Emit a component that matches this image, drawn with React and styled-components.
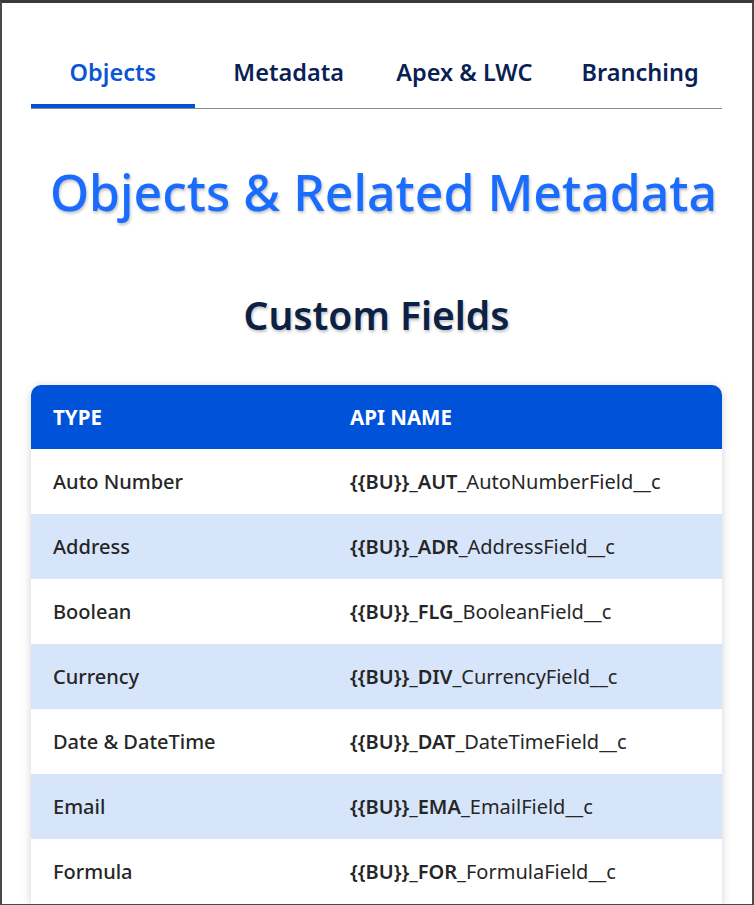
import React from "react";
import styled, { createGlobalStyle } from "styled-components";

const Global = createGlobalStyle`
  html, body { margin: 0; padding: 0; background: #fff; }
  body { font-family: "Noto Sans", "Open Sans", sans-serif; }
  * { box-sizing: border-box; }
`;

const Frame = styled.div`
  width: 754px;
  height: 905px;
  overflow: hidden;
  border-top: 3px solid #3a3a3a;
  border-left: 2px solid #4a4a4a;
  border-right: 2px solid #4a4a4a;
  border-bottom: 1px solid #4a4a4a;
  background: #fff;
`;

const Page = styled.div`
  padding: 43px 30px 0 29px;
`;

const Tabs = styled.nav`
  display: grid;
  grid-template-columns: repeat(4, 1fr);
  column-gap: 12px;
  border-bottom: 1px solid #8a8a8a;
`;

const Tab = styled.div`
  height: 62px;
  display: flex;
  align-items: flex-start;
  justify-content: center;
  padding-top: 10px;
  font-size: 23.5px;
  font-weight: 600;
  color: ${(p) => (p.$active ? "#0b56d6" : "#0a1f55")};
  border-bottom: 4px solid ${(p) => (p.$active ? "#0052d9" : "transparent")};
`;

const Title = styled.h1`
  margin: 53px 0 0;
  text-align: center;
  padding-left: 14px;
  font-size: 50px;
  font-weight: 500;
  line-height: 1.2;
  color: #1a6cff;
  text-shadow: 1px 2px 3px rgba(0, 0, 0, 0.25);
`;

const Subtitle = styled.h2`
  margin: 70px 0 0;
  text-align: center;
  font-size: 39px;
  font-weight: 600;
  line-height: 1.2;
  color: #0b2145;
  text-shadow: 1px 2px 3px rgba(0, 0, 0, 0.25);
`;

const Table = styled.div`
  margin-top: 46px;
  border-radius: 10px 10px 0 0;
  box-shadow: 0 2px 10px rgba(0, 0, 0, 0.18);
  overflow: hidden;
`;

const Row = styled.div`
  display: grid;
  grid-template-columns: 297px 1fr;
  height: ${(p) => (p.$head ? 64 : 65)}px;
  align-items: center;
  background: ${(p) => (p.$head ? "#0052d9" : p.$alt ? "#d7e5fb" : "#fff")};
  color: ${(p) => (p.$head ? "#fff" : "#262626")};
  font-size: ${(p) => (p.$head ? 20.5 : 20)}px;
  font-weight: ${(p) => (p.$head ? 700 : 500)};
`;

const Cell = styled.div`
  padding-left: 22px;
  white-space: nowrap;
`;

const Code = styled.span`
  font-weight: 600;
`;

const Rest = styled.span`
  font-weight: 400;
`;

const rows = [
  ["Auto Number", "AUT", "AutoNumberField__c"],
  ["Address", "ADR", "AddressField__c"],
  ["Boolean", "FLG", "BooleanField__c"],
  ["Currency", "DIV", "CurrencyField__c"],
  ["Date & DateTime", "DAT", "DateTimeField__c"],
  ["Email", "EMA", "EmailField__c"],
  ["Formula", "FOR", "FormulaField__c"],
];

export default function App() {
  return (
    <>
      <Global />
      <Frame>
        <Page>
          <Tabs>
            <Tab $active>Objects</Tab>
            <Tab>Metadata</Tab>
            <Tab>Apex &amp; LWC</Tab>
            <Tab>Branching</Tab>
          </Tabs>
          <Title>Objects &amp; Related Metadata</Title>
          <Subtitle>Custom Fields</Subtitle>
          <Table>
            <Row $head>
              <Cell>TYPE</Cell>
              <Cell>API NAME</Cell>
            </Row>
            {rows.map(([type, code, name], i) => (
              <Row key={type} $alt={i % 2 === 1}>
                <Cell>{type}</Cell>
                <Cell>
                  <Code>{`{{BU}}_${code}`}</Code>
                  <Rest>_{name}</Rest>
                </Cell>
              </Row>
            ))}
          </Table>
        </Page>
      </Frame>
    </>
  );
}
